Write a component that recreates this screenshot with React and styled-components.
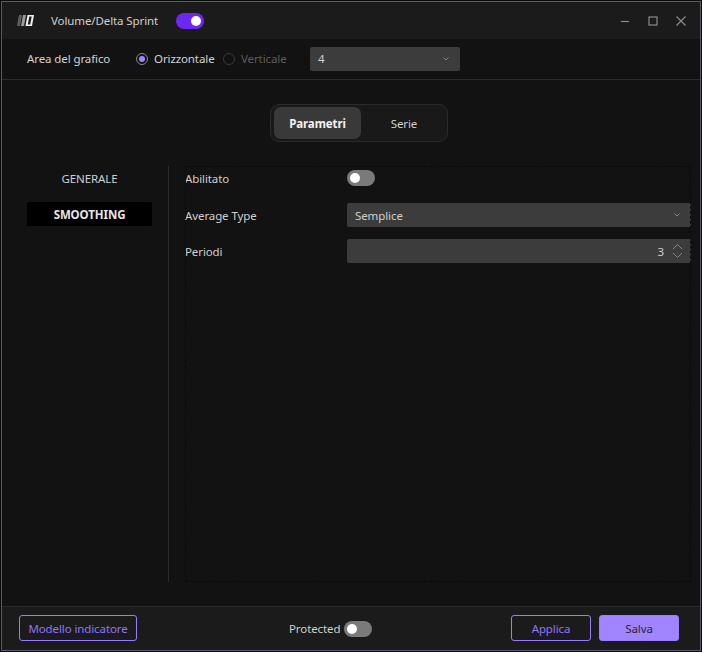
import React from 'react';
import styled, { createGlobalStyle } from 'styled-components';

const Global = createGlobalStyle`
  html, body { margin: 0; padding: 0; background: #0b0b0b; }
  * { box-sizing: border-box; }
`;

const Frame = styled.div`
  width: 702px;
  height: 652px;
  padding: 1px;
  background: #0b0b0b;
  font-family: "Noto Sans", "Open Sans", sans-serif;
  font-size: 11.5px;
  letter-spacing: -0.1px;
  color: #d2d2d2;
`;
const Win = styled.div`
  width: 700px;
  height: 650px;
  border: 1px solid #5b5873;
  display: flex;
  flex-direction: column;
  background: #121212;
`;
const TitleBar = styled.header`
  height: 37px;
  flex: none;
  display: flex;
  align-items: center;
  padding: 0 14px 0 15px;
  background: #1b1b1b;
`;
const Logo = styled.svg`
  width: 17px;
  height: 11px;
  flex: none;
  margin-top: -1px;
`;
const Title = styled.span`
  margin-left: 17px;
  color: #cfcfcf;
`;
const Toggle = styled.span`
  width: 28px;
  height: 16px;
  flex: none;
  border-radius: 8px;
  display: flex;
  align-items: center;
  padding: 0 3px;
  justify-content: ${p => (p.$on ? 'flex-end' : 'flex-start')};
  background: ${p => (p.$on ? '#6d28f0' : '#7a7a7a')};
  &::after {
    content: '';
    width: 10px;
    height: 10px;
    border-radius: 50%;
    background: #fff;
  }
`;
const TitleToggle = styled(Toggle)`
  margin-left: 18px;
`;
const WinControls = styled.div`
  margin-left: auto;
  display: flex;
  align-items: center;
  gap: 18px;
`;
const WinIcon = styled.svg`
  width: 10px;
  height: 10px;
  display: block;
  stroke: #8b8b8b;
  stroke-width: 1.2;
  fill: none;
`;
const OptionsBar = styled.div`
  height: 41px;
  flex: none;
  display: flex;
  align-items: center;
  padding: 0 0 1px 25px;
  border-bottom: 1px solid #2c2c2c;
`;
const OptionLabel = styled.span`
  width: 109px;
  flex: none;
  color: #d2d2d2;
`;
const Radio = styled.label`
  display: flex;
  align-items: center;
  gap: 6px;
  width: ${p => p.$w}px;
  flex: none;
  color: ${p => (p.$disabled ? '#5f5a5a' : '#d2d2d2')};
`;
const RadioDot = styled.span`
  width: 12px;
  height: 12px;
  border-radius: 50%;
  border: 1px solid ${p => (p.$on ? '#8a8a8a' : '#3a3a3a')};
  display: flex;
  align-items: center;
  justify-content: center;
  &::after {
    content: '';
    width: 6px;
    height: 6px;
    border-radius: 50%;
    background: ${p => (p.$on ? '#a184ff' : 'transparent')};
  }
`;
const Field = styled.div`
  height: 24px;
  display: flex;
  align-items: center;
  padding: 0 8px;
  border-radius: 2px;
  background: #3c3c3c;
  color: #cfcfcf;
`;
const AreaSelect = styled(Field)`
  width: 150px;
  flex: none;
`;
const Chevron = styled.svg`
  width: 6px;
  height: 4px;
  margin-left: auto;
  margin-right: 3px;
  stroke: #858585;
  stroke-width: 1;
  fill: none;
`;
const Body = styled.main`
  flex: 1;
  min-height: 0;
  display: flex;
  flex-direction: column;
  padding-top: 24px;
`;
const Tabs = styled.div`
  align-self: center;
  margin-left: 16px;
  width: 178px;
  height: 38px;
  display: flex;
  align-items: center;
  padding-left: 3px;
  border: 1px solid #2b2b2b;
  border-radius: 9px;
  background: #191919;
`;
const Tab = styled.div`
  height: 32px;
  width: ${p => (p.$active ? 87 : 86)}px;
  flex: none;
  display: flex;
  align-items: center;
  justify-content: center;
  border-radius: 7px;
  background: ${p => (p.$active ? '#393939' : 'transparent')};
  font-weight: ${p => (p.$active ? 700 : 400)};
  color: ${p => (p.$active ? '#f2f2f2' : '#cfcfcf')};
`;
const Columns = styled.div`
  flex: 1;
  min-height: 0;
  display: flex;
  margin-top: 24px;
  margin-bottom: 24px;
  padding-left: 25px;
  padding-right: 9px;
`;
const Sidebar = styled.nav`
  width: 142px;
  flex: none;
  display: flex;
  flex-direction: column;
  gap: 12px;
  border-right: 1px solid #2c2c2c;
  padding-right: 16px;
`;
const NavItem = styled.div`
  height: 24px;
  display: flex;
  align-items: center;
  justify-content: center;
  border-radius: 1px;
  background: ${p => (p.$active ? '#000' : 'transparent')};
  font-weight: ${p => (p.$active ? 700 : 400)};
  color: ${p => (p.$active ? '#e6e6e6' : '#cfcfcf')};
`;
const Panel = styled.section`
  flex: 1;
  margin-left: 16px;
  display: flex;
  flex-direction: column;
  gap: 12px;
  outline: 1px dashed #0a0a0a;
  outline-offset: -1px;
`;
const Row = styled.div`
  height: 24px;
  flex: none;
  display: grid;
  grid-template-columns: 162px 1fr;
  align-items: center;
  color: #cfcfcf;
  &:first-child { margin-bottom: 1px; }
`;
const Number = styled(Field)`
  justify-content: flex-end;
  padding-right: 8px;
`;
const Stepper = styled.svg`
  width: 11px;
  height: 14px;
  margin-left: 8px;
  stroke: #858585;
  stroke-width: 1;
  fill: none;
`;
const Footer = styled.footer`
  height: 44px;
  flex: none;
  display: flex;
  align-items: center;
  padding: 0 21px 0 17px;
  border-top: 1px solid #2a2a2a;
  background: #1b1b1b;
`;
const Button = styled.button`
  height: 26px;
  width: ${p => p.$w}px;
  padding: 0;
  margin-top: -1px;
  border-radius: 3px;
  border: 1px solid #9a7dff;
  font: inherit;
  letter-spacing: inherit;
  background: ${p => (p.$solid ? '#a184ff' : 'transparent')};
  color: ${p => (p.$solid ? '#2a2440' : '#8f74ff')};
`;
const Protected = styled.div`
  margin-left: 152px;
  display: flex;
  align-items: center;
  gap: 4px;
  color: #cfcfcf;
`;
const Actions = styled.div`
  margin-left: auto;
  display: flex;
  gap: 8px;
`;

export default function App() {
  return (
    <Frame>
      <Global />
      <Win>
        <TitleBar>
          <Logo viewBox="0 0 17 11">
            <path d="M2 0h3L3 11H0z" fill="#5f5f5f" />
            <path d="M6 0h3L7 11H4z" fill="#9a9a9a" />
            <path d="M10.500 0H17l-2 11H8.500zM12.300 1.500l-1.500 8h2.400l1.500-8z" fill="#f0f0f0" fillRule="evenodd" />
          </Logo>
          <Title>Volume/Delta Sprint</Title>
          <TitleToggle $on />
          <WinControls>
            <WinIcon viewBox="0 0 10 10"><path d="M1 5.500h8" /></WinIcon>
            <WinIcon viewBox="0 0 10 10"><rect x="1" y="1" width="8" height="8" /></WinIcon>
            <WinIcon viewBox="0 0 10 10"><path d="M.5.5l9 9M9.500.5l-9 9" /></WinIcon>
          </WinControls>
        </TitleBar>
        <OptionsBar>
          <OptionLabel>Area del grafico</OptionLabel>
          <Radio $w={87}><RadioDot $on />Orizzontale</Radio>
          <Radio $disabled $w={87}><RadioDot />Verticale</Radio>
          <AreaSelect>
            4
            <Chevron viewBox="0 0 6 4"><path d="M.5.5L3 3 5.500.5" /></Chevron>
          </AreaSelect>
        </OptionsBar>
        <Body>
          <Tabs>
            <Tab $active>Parametri</Tab>
            <Tab>Serie</Tab>
          </Tabs>
          <Columns>
            <Sidebar>
              <NavItem>GENERALE</NavItem>
              <NavItem $active>SMOOTHING</NavItem>
            </Sidebar>
            <Panel>
              <Row>Abilitato<Toggle /></Row>
              <Row>
                Average Type
                <Field>Semplice<Chevron viewBox="0 0 6 4"><path d="M.5.5L3 3 5.500.5" /></Chevron></Field>
              </Row>
              <Row>
                Periodi
                <Number>
                  3
                  <Stepper viewBox="0 0 11 14"><path d="M1 5l4.500-4.500L10 5M1 9l4.500 4.500L10 9" /></Stepper>
                </Number>
              </Row>
            </Panel>
          </Columns>
        </Body>
        <Footer>
          <Button $w={118}>Modello indicatore</Button>
          <Protected>Protected<Toggle /></Protected>
          <Actions>
            <Button $w={80}>Applica</Button>
            <Button $w={80} $solid>Salva</Button>
          </Actions>
        </Footer>
      </Win>
    </Frame>
  );
}
